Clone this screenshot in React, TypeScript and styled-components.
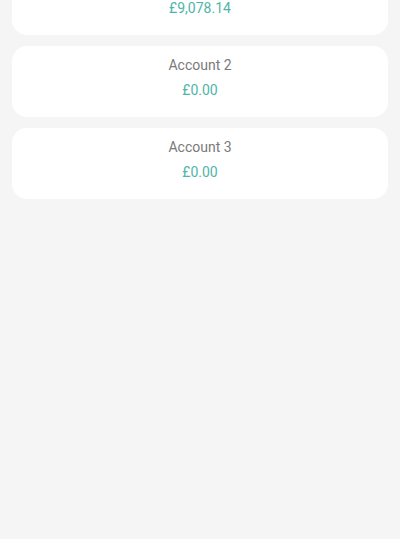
import styled, { createGlobalStyle } from "styled-components";

const GlobalStyle = createGlobalStyle`
  html, body {
    margin: 0;
    padding: 0;
    background-color: #f5f5f5;
    font-family: Roboto, "Liberation Sans", sans-serif;
  }
`;

const Page = styled.div`
  min-height: 539px;
  background-color: #f5f5f5;
  overflow: hidden;
`;

// the list is scrolled a little, so the first card is cut at the top
const List = styled.div`
  display: flex;
  flex-direction: column;
  gap: 11px;
  padding: 0 12px;
  margin-top: -36px;
`;

const Card = styled.div`
  background-color: #ffffff;
  border-radius: 15px;
  height: 71px;
  box-sizing: border-box;
  padding: 9px 16px 0;
  display: flex;
  flex-direction: column;
  align-items: center;
  gap: 5px;
`;

const Name = styled.div`
  font-size: 14px;
  line-height: 20px;
  color: #7a7a7a;
`;

const Balance = styled.div`
  font-size: 14px;
  line-height: 20px;
  color: #4fb5a9;
`;

const accounts = [
  { name: "Account 1", balance: "£9,078.14" },
  { name: "Account 2", balance: "£0.00" },
  { name: "Account 3", balance: "£0.00" },
];

const App = () => {
  return (
    <>
      <GlobalStyle />
      <Page>
        <List>
          {accounts.map((account) => (
            <Card key={account.name}>
              <Name>{account.name}</Name>
              <Balance>{account.balance}</Balance>
            </Card>
          ))}
        </List>
      </Page>
    </>
  );
};

export default App;
